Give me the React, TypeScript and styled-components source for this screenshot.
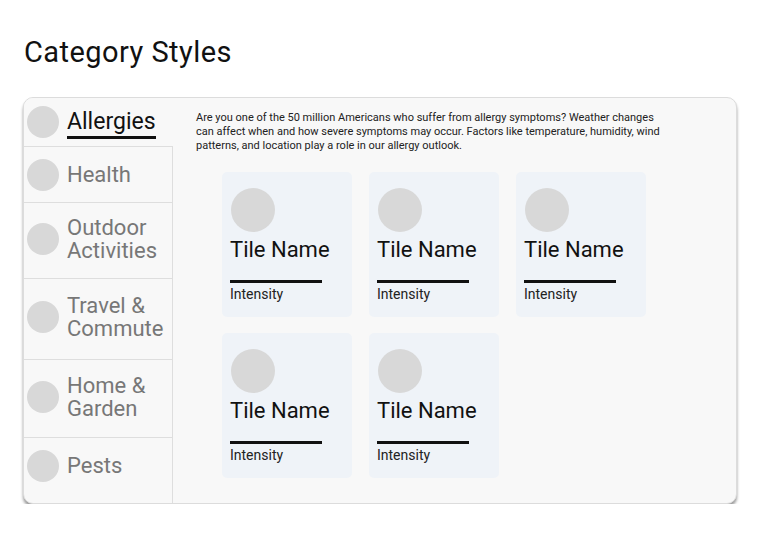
import React from "react";
import styled, { createGlobalStyle } from "styled-components";

const Global = createGlobalStyle`
  html, body { margin: 0; padding: 0; background: #ffffff; }
  body { font-family: Roboto, "Noto Sans", sans-serif; color: #111; }
`;

const Page = styled.div`
  padding: 32px 22px 0 23px;
  width: 714px;
`;

const Title = styled.h1`
  margin: 0 0 25px 1px;
  font-size: 29px;
  font-weight: 400;
  line-height: 40px;
  color: #111;
  letter-spacing: 0.45px;
`;

const Card = styled.div`
  display: flex;
  height: 407px;
  box-sizing: border-box;
  background: #f8f8f8;
  border: 1px solid #dcdcdc;
  border-radius: 10px;
  box-shadow: 0 3px 3px rgba(0, 0, 0, 0.4);
  overflow: hidden;
`;

const Sidebar = styled.nav`
  width: 148px;
  display: flex;
  flex-direction: column;
  flex-shrink: 0;
  border-right: 1px solid #dedede;
`;

const NavItem = styled.div<{ $h: number; $active?: boolean; $multi?: boolean }>`
  height: ${(p) => p.$h}px;
  flex-shrink: 0;
  box-sizing: border-box;
  display: flex;
  align-items: center;
  gap: 8px;
  padding-left: 3px;
  padding-bottom: ${(p) => (p.$multi ? "4px" : "0")};
  border-bottom: 1px solid #dedede;
  background: #f8f8f8;
  margin-right: ${(p) => (p.$active ? "-1px" : "0")};
  &:last-child {
    border-bottom: none;
  }
`;

const Dot = styled.span<{ $size: number }>`
  width: ${(p) => p.$size}px;
  height: ${(p) => p.$size}px;
  border-radius: 50%;
  background: #d8d8d8;
  flex-shrink: 0;
`;

const NavLabel = styled.span<{ $active?: boolean }>`
  font-size: ${(p) => (p.$active ? 23 : 22)}px;
  line-height: 23px;
  color: ${(p) => (p.$active ? "#111" : "#777")};
  ${(p) =>
    p.$active
      ? `border-bottom: 3px solid #111; padding-bottom: 3px; margin-top: 4px;`
      : ""}
`;

const Main = styled.section`
  flex: 1;
  padding: 13px 20px 0 23px;
`;

const Intro = styled.p`
  margin: 0;
  font-size: 11px;
  line-height: 14px;
  color: #222;
  max-width: 472px;
`;

const TileGrid = styled.div`
  display: grid;
  grid-template-columns: repeat(3, 130px);
  column-gap: 17px;
  row-gap: 16px;
  margin: 19px 0 0 26px;
`;

const Tile = styled.div`
  height: 145px;
  box-sizing: border-box;
  background: #eff3f8;
  border-radius: 5px;
  padding: 16px 8px 0 8px;
  display: flex;
  flex-direction: column;
`;

const TileDot = styled(Dot)`
  margin-left: 1px;
`;

const TileName = styled.div`
  margin-top: 4px;
  font-size: 22px;
  line-height: 28px;
  color: #111;
`;

const Bar = styled.div`
  margin-top: 16px;
  width: 92px;
  height: 3px;
  background: #111;
`;

const Intensity = styled.div`
  margin-top: 2px;
  font-size: 14px;
  line-height: 18px;
  color: #222;
`;

const nav = [
  { label: "Allergies", h: 49, active: true },
  { label: "Health", h: 56 },
  { label: "Outdoor\nActivities", h: 76 },
  { label: "Travel &\nCommute", h: 81 },
  { label: "Home &\nGarden", h: 78 },
  { label: "Pests", h: 55 },
];

export default function App() {
  return (
    <>
      <Global />
      <Page>
        <Title>Category Styles</Title>
        <Card>
          <Sidebar>
            {nav.map((n) => {
              const lines = n.label.split("\n");
              return (
                <NavItem key={n.label} $h={n.h} $active={n.active} $multi={lines.length > 1}>
                  <Dot $size={32} />
                  <NavLabel $active={n.active}>
                    {lines.map((l, i) => (
                      <React.Fragment key={i}>
                        {i > 0 && <br />}
                        {l}
                      </React.Fragment>
                    ))}
                  </NavLabel>
                </NavItem>
              );
            })}
          </Sidebar>
          <Main>
            <Intro>
              Are you one of the 50 million Americans who suffer from allergy symptoms? Weather changes
              can affect when and how severe symptoms may occur. Factors like temperature, humidity, wind
              patterns, and location play a role in our allergy outlook.
            </Intro>
            <TileGrid>
              {[0, 1, 2, 3, 4].map((i) => (
                <Tile key={i}>
                  <TileDot $size={44} />
                  <TileName>Tile Name</TileName>
                  <Bar />
                  <Intensity>Intensity</Intensity>
                </Tile>
              ))}
            </TileGrid>
          </Main>
        </Card>
      </Page>
    </>
  );
}
